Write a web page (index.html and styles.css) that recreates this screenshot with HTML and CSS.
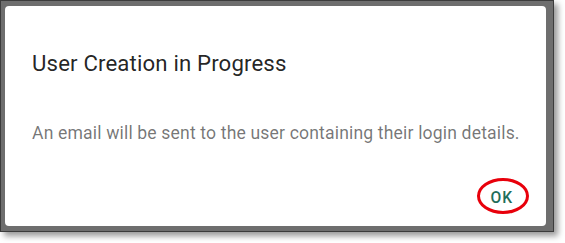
FILE: index.html
```html
<!DOCTYPE html>
<html>
<head>
<meta charset="utf-8">
<link rel="stylesheet" href="styles.css">
</head>
<body>
<div class="frame">
  <div class="dialog">
    <h2 class="title">User Creation in Progress</h2>
    <p class="content">An email will be sent to the user containing their login details.</p>
    <div class="actions">
      <button class="ok">OK</button>
    </div>
  </div>
</div>
</body>
</html>
```
FILE: styles.css
```css
html, body {
  margin: 0;
  padding: 0;
  background: #ffffff;
}
body {
  width: 565px;
  height: 243px;
  overflow: hidden;
  font-family: Roboto, "Liberation Sans", sans-serif;
}
.frame {
  box-sizing: border-box;
  width: 554px;
  height: 232px;
  border: 1px solid #3c3c3c;
  background: #6e6e6e;
  padding: 5px 7px 5px 4px;
  box-shadow: 4px 4px 6px rgba(0, 0, 0, 0.4);
}
.dialog {
  box-sizing: border-box;
  height: 100%;
  background: #ffffff;
  border-radius: 4px;
  display: flex;
  flex-direction: column;
  padding: 40.5px 8px 0 27px;
}
.title {
  margin: 0;
  font-size: 22.2px;
  line-height: 32px;
  font-weight: 400;
  color: rgba(0, 0, 0, 0.87);
  letter-spacing: 0.15px;
}
.content {
  margin: 41.5px 0 0 0;
  font-size: 17.6px;
  line-height: 26px;
  font-weight: 400;
  color: rgba(0, 0, 0, 0.55);
  letter-spacing: 0.15px;
}
.actions {
  display: flex;
  justify-content: flex-end;
  margin-top: 33.7px;
  padding-right: 25px;
}
.ok {
  position: relative;
  border: none;
  background: transparent;
  font-family: Roboto, "Liberation Sans", sans-serif;
  font-size: 15.6px;
  font-weight: 500;
  letter-spacing: 0.9px;
  line-height: 36px;
  height: 36px;
  padding: 0 0 0 1px;
  color: #1f6e5b;
}
.ok::after {
  content: "";
  position: absolute;
  left: calc(50% - 24px);
  top: -2px;
  width: 46px;
  height: 30px;
  border: 3px solid #e8000b;
  border-radius: 50%;
}
```
